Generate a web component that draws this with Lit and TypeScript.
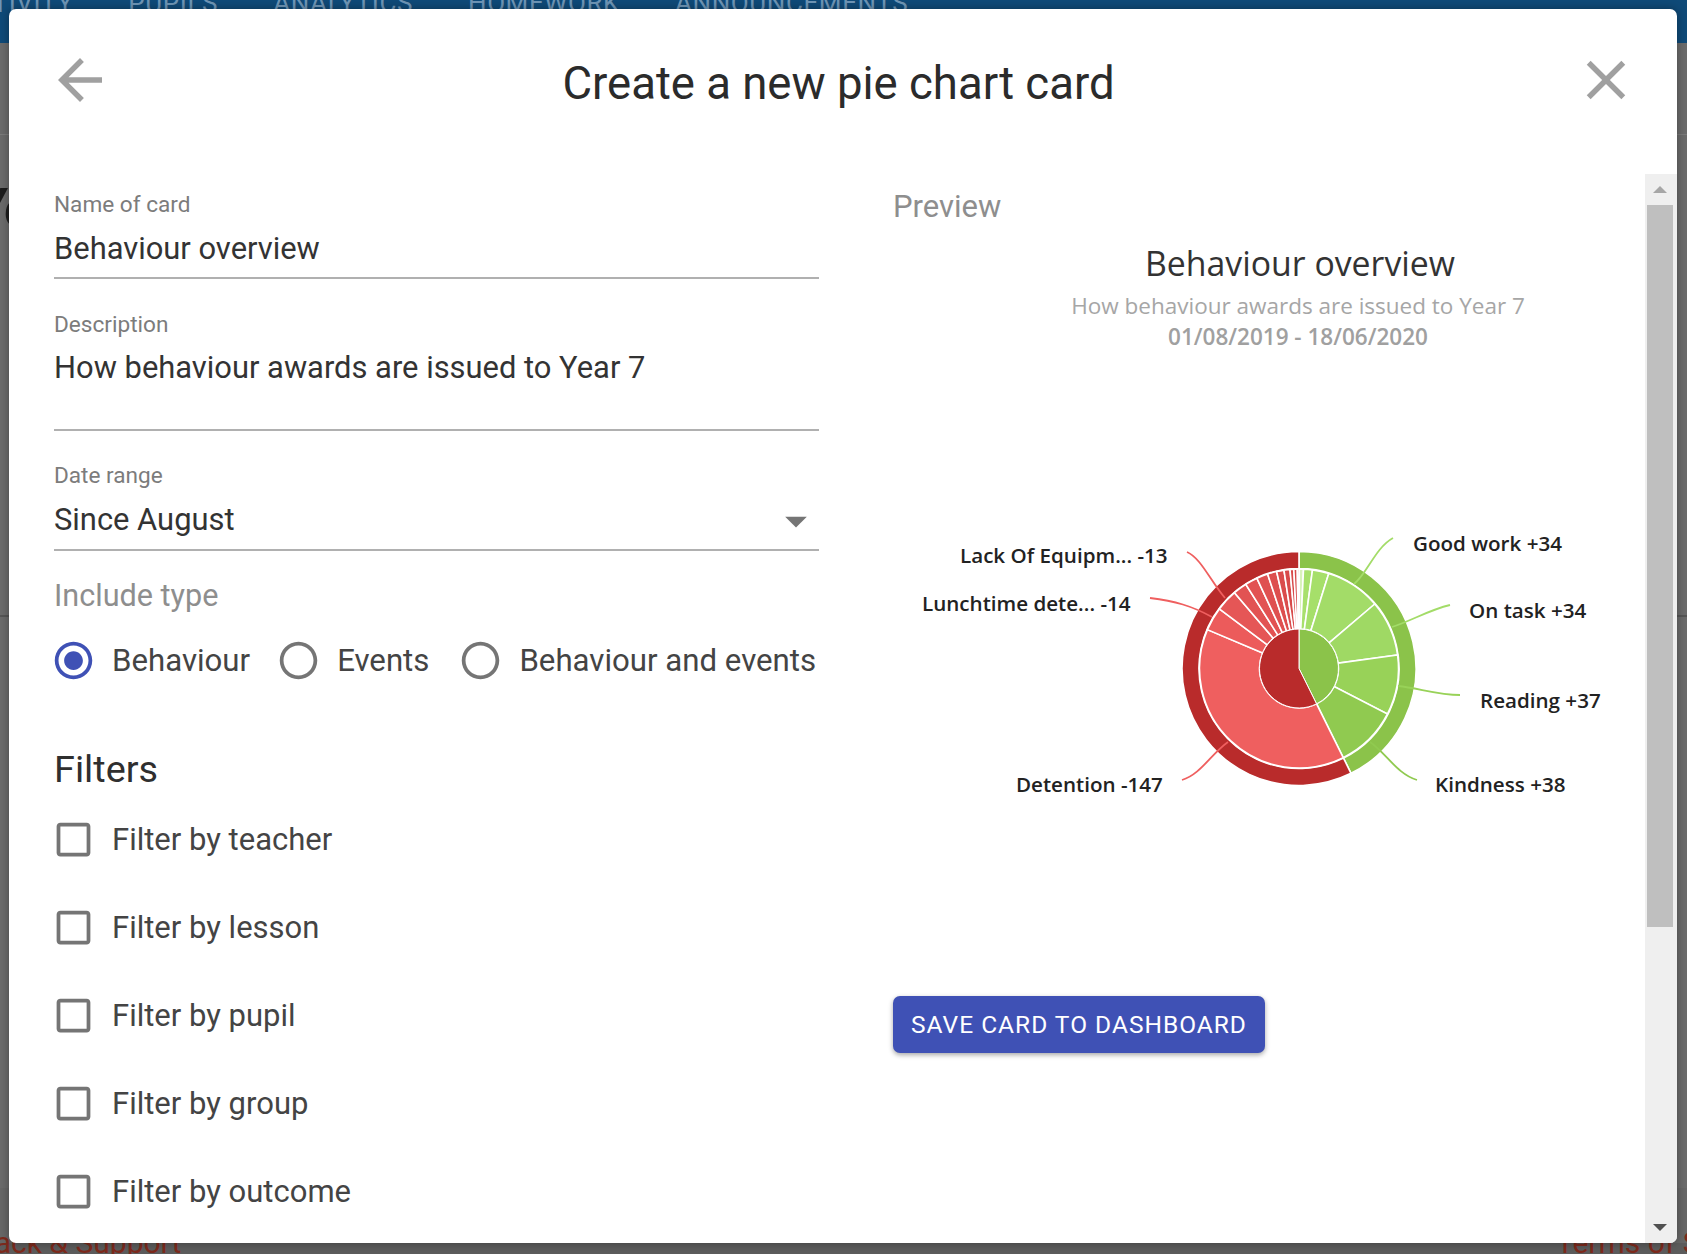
import { LitElement, html, css, svg } from "lit";
import { customElement } from "lit/decorators.js";

const CX = 1299 - 893;
const CY = 668.5 - 206;

function pt(r: number, a: number) {
  const t = (a * Math.PI) / 180;
  return [CX + r * Math.sin(t), CY - r * Math.cos(t)];
}
function sector(r0: number, r1: number, a0: number, a1: number) {
  const large = a1 - a0 > 180 ? 1 : 0;
  const [x0, y0] = pt(r1, a0);
  const [x1, y1] = pt(r1, a1);
  if (r0 === 0) {
    return `M${CX} ${CY}L${x0} ${y0}A${r1} ${r1} 0 ${large} 1 ${x1} ${y1}Z`;
  }
  const [x2, y2] = pt(r0, a1);
  const [x3, y3] = pt(r0, a0);
  return `M${x0} ${y0}A${r1} ${r1} 0 ${large} 1 ${x1} ${y1}L${x2} ${y2}A${r0} ${r0} 0 ${large} 0 ${x3} ${y3}Z`;
}

const GREEN_END = 153.6;
const leaves: [number, number, string][] = [
  [0, 2.6, "#d9f2bc"],
  [2.6, 7.8, "#a8e06c"],
  [7.8, 17.4, "#a6df6a"],
  [17.4, 49.6, "#a3dc68"],
  [49.6, 82.2, "#9fd964"],
  [82.2, 117.2, "#98d258"],
  [117.2, GREEN_END, "#90ca50"],
  [GREEN_END, 293, "#ef5f5f"],
  [293, 306.8, "#ec5b5b"],
  [306.8, 319.6, "#e55656"],
  [319.6, 327.7, "#e25353"],
  [327.7, 335, "#e25252"],
  [335, 341.6, "#df5050"],
  [341.6, 347, "#dd4e4e"],
  [347, 351.3, "#da4c4c"],
  [351.3, 354.8, "#d84a4a"],
  [354.8, 357, "#d84a4a"],
  [357, 359, "#d84a4a"],
  [359, 360, "#d84a4a"],
];

const connectors: [string, string][] = [
  ["M461 378C474 368 482 342 500 332", "#a3dc68"],
  ["M499 421C520 414 536 404 557 399", "#a3dc68"],
  ["M505 480C525 482 545 489 567 489", "#98d258"],
  ["M477 536C494 548 504 568 524 574", "#90ca50"],
  ["M335 536C318 548 308 568 289 574", "#ef5f5f"],
  ["M319 411C299 400 282 395 257 392", "#ef5f5f"],
  ["M332 392C318 376 308 352 294 346", "#ef5f5f"],
];

const labels: [number, number, string][] = [
  [520, 344.5, "Good work +34"],
  [576, 411.5, "On task +34"],
  [587, 501.5, "Reading +37"],
  [542, 585.5, "Kindness +38"],
  [123, 585.5, "Detention -147"],
  [29, 404.5, "Lunchtime dete... -14"],
  [67, 356.5, "Lack Of Equipm... -13"],
];

const chart = svg`
  <text class="c-title" x="${1300 - 893}" y="70" text-anchor="middle">Behaviour overview</text>
  <text class="c-sub" x="${1298 - 893}" y="108" text-anchor="middle">How behaviour awards are issued to Year 7</text>
  <text class="c-date" x="${1298 - 893}" y="139" text-anchor="middle">01/08/2019 - 18/06/2020</text>
  <path d="${sector(100, 117, 0, GREEN_END)}" fill="#8bc34a" stroke="#fff" stroke-width="1.6"/>
  <path d="${sector(100, 117, GREEN_END, 360)}" fill="#b92b2b" stroke="#fff" stroke-width="1.6"/>
  ${leaves.map(([a, b, c]) => svg`<path d="${sector(39.5, 99.5, a, b)}" fill="${c}" stroke="#fff" stroke-width="1.6"/>`)}
  <path d="${sector(0, 39.5, 0, GREEN_END)}" fill="#8bc34a" stroke="#fff" stroke-width="1"/>
  <path d="${sector(0, 39.5, GREEN_END, 360)}" fill="#b92b2b" stroke="#fff" stroke-width="1"/>
  ${connectors.map(([d, c]) => svg`<path d="${d}" fill="none" stroke="${c}" stroke-width="1.8"/>`)}
  ${labels.map(([x, y, t]) => svg`<text class="c-label" x="${x}" y="${y}">${t}</text>`)}
`;

const backIcon = html`<svg class="head-icon" viewBox="0 0 24 24"><path d="M20 11H7.83l5.59-5.59L12 4l-8 8 8 8 1.41-1.41L7.83 13H20v-2z"/></svg>`;
const closeIcon = html`<svg class="head-icon" viewBox="0 0 24 24"><path d="M19 6.41L17.59 5 12 10.59 6.41 5 5 6.41 10.59 12 5 17.59 6.41 19 12 13.41 17.59 19 19 17.59 13.41 12z"/></svg>`;
const caret = html`<svg class="caret" viewBox="0 0 24 24"><path d="M7 10l5 5 5-5z"/></svg>`;
const radioOff = html`<svg class="ctl" viewBox="0 0 24 24"><path d="M12 2C6.48 2 2 6.48 2 12s4.48 10 10 10 10-4.48 10-10S17.52 2 12 2zm0 18c-4.42 0-8-3.58-8-8s3.58-8 8-8 8 3.58 8 8-3.58 8-8 8z"/></svg>`;
const radioOn = html`<svg class="ctl on" viewBox="0 0 24 24"><path d="M12 7c-2.76 0-5 2.24-5 5s2.24 5 5 5 5-2.24 5-5-2.24-5-5-5zm0-5C6.48 2 2 6.48 2 12s4.48 10 10 10 10-4.48 10-10S17.52 2 12 2zm0 18c-4.42 0-8-3.58-8-8s3.58-8 8-8 8 3.58 8 8-3.58 8-8 8z"/></svg>`;
const checkOff = html`<svg class="ctl" viewBox="0 0 24 24"><path d="M19 5v14H5V5h14m0-2H5c-1.1 0-2 .9-2 2v14c0 1.1.9 2 2 2h14c1.1 0 2-.9 2-2V5c0-1.1-.9-2-2-2z"/></svg>`;

@customElement("app-root")
export class AppRoot extends LitElement {
  static styles = css`
    :host {
      display: block;
      position: relative;
      width: 1687px;
      height: 1254px;
      overflow: hidden;
      font-family: Roboto, "Liberation Sans", sans-serif;
      background: #6b6b6b;
    }
    .page { height: 100%; display: flex; flex-direction: column; }
    .nav {
      height: 43px;
      flex: none;
      background: #0f4a78;
      color: #6f96b6;
      font-size: 26px;
      line-height: 14px;
      display: flex;
      gap: 55px;
      overflow: hidden;
      letter-spacing: 0.6px;
      white-space: nowrap;
    }
    .nav span { margin-top: -4px; }
    .nav span:first-child { margin-left: -42px; }
    .sub { height: 92px; flex: none; border-bottom: 1px solid #7b7b7b; box-sizing: border-box; }
    .heading {
      margin: 44px 0 0 -26px;
      height: 60px;
      flex: none;
      font-size: 56px;
      font-weight: 500;
      line-height: 60px;
      letter-spacing: -3px;
      color: #1c1c1c;
    }
    .rule { margin-top: 376px; height: 2px; flex: none; background: #565656; }
    .fill { flex: 1; }
    .foot {
      height: 66px;
      flex: none;
      box-sizing: border-box;
      padding-top: 41px;
      background: linear-gradient(#676767 0 55px, #5c5c5c 55px);
      color: #7d2a1c;
      font-size: 30px;
      display: flex;
      justify-content: space-between;
      white-space: nowrap;
      line-height: 28px;
      overflow: hidden;
    }
    .foot span:first-child { margin-left: -24px; }
    .foot span:last-child { width: 131px; flex: none; }
    .modal {
      position: absolute;
      left: 9px;
      top: 9px;
      width: 1668px;
      height: 1234px;
      background: #fff;
      border-radius: 7px;
      box-shadow: 0 0 10px rgba(0, 0, 0, 0.35);
      display: flex;
      flex-direction: column;
      overflow: hidden;
    }
    .head {
      height: 165px;
      flex: none;
      display: flex;
      padding: 38px 38px 0;
      box-sizing: border-box;
      align-items: flex-start;
    }
    .head-icon { width: 66px; height: 66px; fill: #a0a0a0; flex: none; }
    .title {
      flex: 1;
      text-align: center;
      padding-right: 9px;
      margin: 11px 0 0;
      font-size: 45.5px;
      line-height: 52px;
      font-weight: 400;
      color: #2b2b2b;
    }
    .body { flex: 1; min-height: 0; display: flex; }
    .content { flex: 1; min-width: 0; overflow: hidden; display: flex; padding-left: 45px; }
    .left { width: 765px; flex: none; padding-top: 17px; }
    .right { width: 752px; flex: none; margin-left: 74px; }
    .lab { font-size: 22.6px; line-height: 28px; color: #7c7c7c; }
    .val {
      font-size: 30.9px;
      line-height: 36px;
      color: #333;
      border-bottom: 2px solid #b0b0b0;
    }
    .f1 .val { margin-top: 12px; padding-bottom: 10px; }
    .f2 { margin-top: 32px; }
    .f2 .val { margin-top: 11px; padding-bottom: 43px; }
    .f3 { margin-top: 31px; }
    .f3 .val { margin-top: 12px; padding-bottom: 11px; display: flex; justify-content: space-between; align-items: center; }
    .caret { width: 52px; height: 52px; fill: #757575; margin: -7px -3px -9px 0; }
    .inc { margin-top: 26px; font-size: 30.6px; line-height: 38px; color: #8e8e8e; }
    .radios { margin-top: 23px; height: 44px; display: flex; align-items: center; font-size: 31.2px; color: #444; }
    .opt { display: flex; align-items: center; white-space: nowrap; }
    .opt + .opt { margin-left: 29px; }
    .opt + .opt + .opt { margin-left: 32px; }
    .ctl { width: 45px; height: 45px; fill: #757575; flex: none; margin-right: 16px; margin-left: -3px; }
    .ctl.on { fill: #3f51b5; }
    .filters { margin-top: 65px; font-size: 37.8px; line-height: 44px; color: #2f2f2f; font-weight: 400; }
    .rows { margin-top: 4px; }
    .row { height: 88px; display: flex; align-items: center; font-size: 31px; color: #444; }
    .preview { margin-top: 14px; font-size: 31px; line-height: 38px; color: #8e8e8e; }
    .chart { display: block; width: 752px; height: 790px; overflow: visible; margin-top: -20px; }
    .c-title { font: 400 33.8px "Open Sans", sans-serif; fill: #333; }
    .c-sub { font: 400 22.5px "Open Sans", sans-serif; fill: #a6a6a6; }
    .c-date { font: 600 22.5px "Open Sans", sans-serif; fill: #a0a0a0; }
    .c-label { font: 600 20.6px "Open Sans", sans-serif; fill: #222; }
    .save {
      display: block;
      box-sizing: border-box;
      width: 372px;
      height: 57px;
      border: 0;
      border-radius: 7px;
      background: #3f51b5;
      color: #fff;
      font: 400 24.5px Roboto, sans-serif;
      letter-spacing: 1px;
      box-shadow: 0 2px 5px rgba(0, 0, 0, 0.35);
      padding: 0;
    }
    .bar { width: 32px; flex: none; background: #efefef; display: flex; flex-direction: column; align-items: center; box-sizing: border-box; padding-right: 2px; }
    .arrow { height: 31px; display: flex; align-items: center; justify-content: center; flex: none; }
    .arrow i { width: 0; height: 0; border-left: 7px solid transparent; border-right: 7px solid transparent; }
    .up i { border-bottom: 7px solid #a6a6a6; }
    .down i { border-top: 7px solid #505050; }
    .thumb { width: 26px; height: 722px; background: #bfbfbf; flex: none; }
    .gap { flex: 1; }
  `;

  render() {
    return html`
      <div class="page">
        <div class="nav">
          <span>ACTIVITY</span><span>PUPILS</span><span>ANALYTICS</span><span>HOMEWORK</span><span>ANNOUNCEMENTS</span>
        </div>
        <div class="sub"></div>
        <div class="heading">Year</div>
        <div class="rule"></div>
        <div class="fill"></div>
        <div class="foot"><span>Back &amp; Support</span><span>Terms of Service</span></div>
      </div>
      <div class="modal">
        <div class="head">
          ${backIcon}
          <h1 class="title">Create a new pie chart card</h1>
          ${closeIcon}
        </div>
        <div class="body">
          <div class="content">
            <div class="left">
              <div class="f1"><div class="lab">Name of card</div><div class="val">Behaviour overview</div></div>
              <div class="f2"><div class="lab">Description</div><div class="val">How behaviour awards are issued to Year 7</div></div>
              <div class="f3"><div class="lab">Date range</div><div class="val"><span>Since August</span>${caret}</div></div>
              <div class="inc">Include type</div>
              <div class="radios">
                <label class="opt">${radioOn}Behaviour</label>
                <label class="opt">${radioOff}Events</label>
                <label class="opt">${radioOff}Behaviour and events</label>
              </div>
              <div class="filters">Filters</div>
              <div class="rows">
                ${["teacher", "lesson", "pupil", "group", "outcome"].map(
                  (t) => html`<div class="row">${checkOff}Filter by ${t}</div>`
                )}
              </div>
            </div>
            <div class="right">
              <div class="preview">Preview</div>
              <svg class="chart" viewBox="0 0 752 790">${chart}</svg>
              <button class="save">SAVE CARD TO DASHBOARD</button>
            </div>
          </div>
          <div class="bar">
            <div class="arrow up"><i></i></div>
            <div class="thumb"></div>
            <div class="gap"></div>
            <div class="arrow down"><i></i></div>
          </div>
        </div>
      </div>
    `;
  }
}
